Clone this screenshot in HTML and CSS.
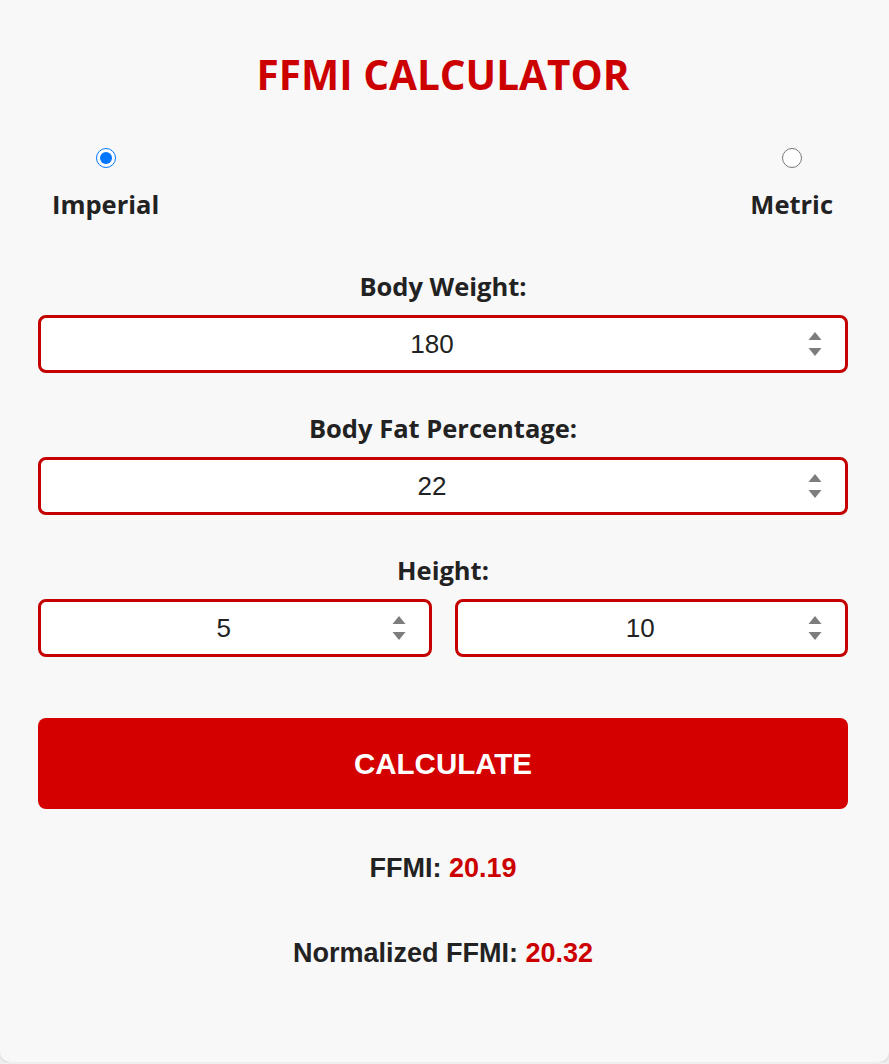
FILE: index.html
```html
<!DOCTYPE html>
<html lang="en">
<head>
<meta charset="utf-8">
<title>FFMI Calculator</title>
<link rel="stylesheet" href="styles.css">
</head>
<body>
<main class="card">
  <h1 class="title">FFMI CALCULATOR</h1>

  <div class="units">
    <label class="unit">
      <input class="unit-radio" type="radio" name="unit" checked>
      <span class="unit-text">Imperial</span>
    </label>
    <label class="unit">
      <input class="unit-radio" type="radio" name="unit">
      <span class="unit-text">Metric</span>
    </label>
  </div>

  <div class="field">
    <div class="field-label">Body Weight:</div>
    <div class="num">
      <input class="num-input" type="number" value="180">
      <svg class="spin" width="14" height="26" viewBox="0 0 14 26"><path d="M7 1 L13.5 9 H0.5 Z" fill="#7d7d7d"/><path d="M0.5 17 H13.5 L7 25 Z" fill="#7d7d7d"/></svg>
    </div>
  </div>

  <div class="field">
    <div class="field-label">Body Fat Percentage:</div>
    <div class="num">
      <input class="num-input" type="number" value="22">
      <svg class="spin" width="14" height="26" viewBox="0 0 14 26"><path d="M7 1 L13.5 9 H0.5 Z" fill="#7d7d7d"/><path d="M0.5 17 H13.5 L7 25 Z" fill="#7d7d7d"/></svg>
    </div>
  </div>

  <div class="field">
    <div class="field-label">Height:</div>
    <div class="pair">
      <div class="num">
        <input class="num-input" type="number" value="5">
        <svg class="spin" width="14" height="26" viewBox="0 0 14 26"><path d="M7 1 L13.5 9 H0.5 Z" fill="#7d7d7d"/><path d="M0.5 17 H13.5 L7 25 Z" fill="#7d7d7d"/></svg>
      </div>
      <div class="num">
        <input class="num-input" type="number" value="10">
        <svg class="spin" width="14" height="26" viewBox="0 0 14 26"><path d="M7 1 L13.5 9 H0.5 Z" fill="#7d7d7d"/><path d="M0.5 17 H13.5 L7 25 Z" fill="#7d7d7d"/></svg>
      </div>
    </div>
  </div>

  <button class="calc" type="button">CALCULATE</button>

  <p class="result">FFMI: <span class="result-val">20.19</span></p>
  <p class="result result-norm">Normalized FFMI: <span class="result-val">20.32</span></p>
</main>
</body>
</html>
```

FILE: styles.css
```css
html, body {
  margin: 0;
  padding: 0;
  background: #eeeeee;
}

.card {
  box-sizing: border-box;
  width: 889px;
  height: 1062px;
  background: #f8f8f8;
  border-radius: 0 0 10px 10px;
  box-shadow: 0 1px 3px rgba(0, 0, 0, 0.12);
  padding: 50px 41px 0 38px;
  color: #222222;
  font-family: "Open Sans", "Liberation Sans", sans-serif;
}

.title {
  margin: 0;
  text-align: center;
  color: #cc0000;
  font-size: 40.5px;
  line-height: 50px;
  font-weight: 700;
}

.units {
  display: flex;
  justify-content: space-between;
  padding: 0 15px 0 14px;
  margin-top: 48px;
}

.unit {
  display: flex;
  flex-direction: column;
  align-items: center;
  gap: 21px;
}

.unit-radio {
  width: 20px;
  height: 20px;
  margin: 0;
  accent-color: #0075ff;
}

.unit-text {
  font-size: 25.5px;
  line-height: 30px;
  font-weight: 700;
}

.field {
  margin-top: 52px;
}

.field + .field {
  margin-top: 40px;
}

.field-label {
  text-align: center;
  font-size: 25.5px;
  line-height: 30px;
  font-weight: 700;
  margin-bottom: 14px;
}

.num {
  position: relative;
}

.num-input {
  box-sizing: border-box;
  display: block;
  width: 100%;
  height: 58px;
  margin: 0;
  border: 3px solid #c40000;
  border-radius: 8px;
  background: #ffffff;
  text-align: center;
  font-family: "Liberation Sans", Arial, sans-serif;
  font-size: 26px;
  color: #222222;
  padding: 0 32px 0 10px;
  outline: none;
  -moz-appearance: textfield;
  appearance: textfield;
}

.num-input::-webkit-inner-spin-button,
.num-input::-webkit-outer-spin-button {
  -webkit-appearance: none;
  margin: 0;
}

.spin {
  position: absolute;
  right: 26px;
  top: 16px;
}

.pair {
  display: grid;
  grid-template-columns: 1fr 1fr;
  gap: 23px;
}

.calc {
  display: block;
  width: 100%;
  height: 91px;
  margin: 61px 0 0;
  border: none;
  border-radius: 8px;
  background: #d40000;
  color: #ffffff;
  font-family: "Liberation Sans", Arial, sans-serif;
  font-size: 29.5px;
  font-weight: 700;
  cursor: pointer;
}

.result {
  margin: 43px 0 0;
  text-align: center;
  font-family: "Liberation Sans", Arial, sans-serif;
  font-size: 27px;
  line-height: 32px;
  font-weight: 700;
  color: #222222;
}

.result-norm {
  margin-top: 53px;
}

.result-val {
  color: #cc0000;
}
```
